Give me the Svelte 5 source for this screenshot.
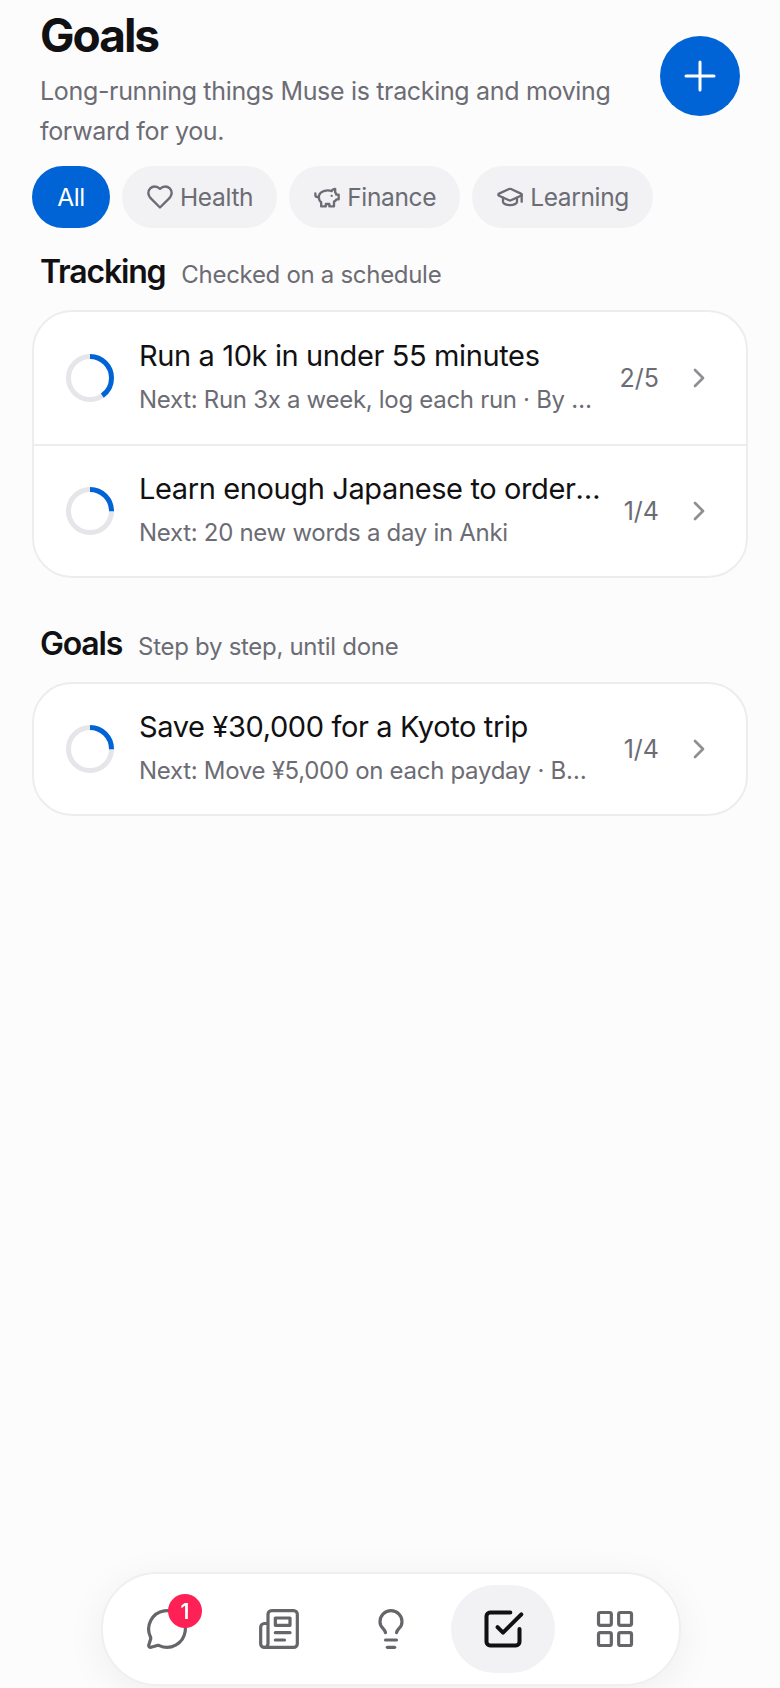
<script>
  const C = 2 * Math.PI * 21.5;
  const sections = [
    { title: 'Tracking', note: 'Checked on a schedule', rows: [
      { t: 'Run a 10k in under 55 minutes', s: 'Next: Run 3x a week, log each run · By Oct 1', c: '2/5', p: 0.4 },
      { t: 'Learn enough Japanese to order ramen', s: 'Next: 20 new words a day in Anki', c: '1/4', p: 0.25 }
    ]},
    { title: 'Goals', note: 'Step by step, until done', rows: [
      { t: 'Save ¥30,000 for a Kyoto trip', s: 'Next: Move ¥5,000 on each payday · By Dec 1', c: '1/4', p: 0.25 }
    ]}
  ];
</script>

<div class="page">
  <header class="head">
    <div class="head-text">
      <h1>Goals</h1>
      <p>Long-running things Muse is tracking and moving forward for you.</p>
    </div>
    <button class="fab" aria-label="Add">
      <svg viewBox="0 0 24 24" width="48" height="48"><path d="M5 12h14M12 5v14"/></svg>
    </button>
  </header>

  <div class="chips">
    <button class="chip on">All</button>
    <button class="chip">
      <svg viewBox="0 0 24 24" width="28" height="28"><path d="M19 14c1.49-1.46 3-3.21 3-5.5A5.5 5.5 0 0 0 16.5 3c-1.76 0-3 .5-4.5 2-1.5-1.5-2.74-2-4.5-2A5.5 5.5 0 0 0 2 8.5c0 2.3 1.5 4.05 3 5.5l7 7Z"/></svg>
      Health
    </button>
    <button class="chip">
      <svg viewBox="0 0 24 24" width="28" height="28"><path d="M19 5c-1.5 0-2.8 1.4-3 2-3.5-1.5-11-.3-11 5 0 1.8 0 3 2 4.5V20h4v-2h3v2h4v-4c1-.5 1.7-1 2-2h2v-4h-2c0-1-.5-1.5-1-2V5z"/><path d="M2 9v1c0 1.1.9 2 2 2h1"/><path d="M16 11h.01"/></svg>
      Finance
    </button>
    <button class="chip">
      <svg viewBox="0 0 24 24" width="28" height="28"><path d="M21.42 10.922a1 1 0 0 0-.019-1.838L12.83 5.18a2 2 0 0 0-1.66 0L2.6 9.08a1 1 0 0 0 0 1.832l8.57 3.908a2 2 0 0 0 1.66 0z"/><path d="M22 10v6"/><path d="M6 12.5V16a6 3 0 0 0 12 0v-3.5"/></svg>
      Learning
    </button>
  </div>

  {#each sections as sec}
    <section>
      <div class="sec-head">
        <h2>{sec.title}</h2>
        <span>{sec.note}</span>
      </div>
      <div class="card">
        {#each sec.rows as r}
          <div class="row">
            <svg class="ring" viewBox="0 0 48 48" width="48" height="48">
              <circle class="track" cx="24" cy="24" r="21.5"/>
              <circle class="arc" cx="24" cy="24" r="21.5" stroke-dasharray="{C * r.p} {C}" transform="rotate(-90 24 24)"/>
            </svg>
            <div class="txt">
              <div class="t">{r.t}</div>
              <div class="s">{r.s}</div>
            </div>
            <span class="count">{r.c}</span>
            <svg class="chev" viewBox="0 0 24 24" width="32" height="32"><path d="m9 18 6-6-6-6"/></svg>
          </div>
        {/each}
      </div>
    </section>
  {/each}
</div>

<nav class="nav">
  <div class="item">
    <svg viewBox="0 0 24 24" width="44" height="44"><path d="M2.992 16.342a2 2 0 0 1 .094 1.167l-1.065 3.29a1 1 0 0 0 1.236 1.168l3.413-.998a2 2 0 0 1 1.099.092 10 10 0 1 0-4.777-4.719"/></svg>
    <span class="badge">1</span>
  </div>
  <div class="item">
    <svg viewBox="0 0 24 24" width="44" height="44"><path d="M4 22h16a2 2 0 0 0 2-2V4a2 2 0 0 0-2-2H8a2 2 0 0 0-2 2v16a2 2 0 0 1-2 2Zm0 0a2 2 0 0 1-2-2v-9c0-1.1.9-2 2-2h2"/><path d="M18 14h-8"/><path d="M15 18h-5"/><path d="M10 6h8v4h-8V6Z"/></svg>
  </div>
  <div class="item">
    <svg viewBox="0 0 24 24" width="44" height="44"><path d="M15 14c.2-1 .7-1.7 1.5-2.5 1-.9 1.5-2.2 1.5-3.5A6 6 0 0 0 6 8c0 1 .2 2.2 1.5 3.5.7.7 1.3 1.5 1.5 2.5"/><path d="M9 18h6"/><path d="M10 22h4"/></svg>
  </div>
  <div class="item active">
    <svg viewBox="0 0 24 24" width="44" height="44"><path d="m9 11 3 3L22 4"/><path d="M21 12v7a2 2 0 0 1-2 2H5a2 2 0 0 1-2-2V5a2 2 0 0 1 2-2h11"/></svg>
  </div>
  <div class="item">
    <svg viewBox="0 0 24 24" width="44" height="44"><rect x="3" y="3" width="7" height="7" rx="1"/><rect x="14" y="3" width="7" height="7" rx="1"/><rect x="14" y="14" width="7" height="7" rx="1"/><rect x="3" y="14" width="7" height="7" rx="1"/></svg>
  </div>
</nav>

<style>
  :global(body) {
    margin: 0;
    background: #fcfcfd;
    font-family: Inter, "Noto Sans", sans-serif;
    color: #111113;
  }
  svg { fill: none; stroke: currentColor; stroke-width: 2; stroke-linecap: round; stroke-linejoin: round; display: block; flex: none; }
  button { font: inherit; border: 0; padding: 0; }
  .page { min-height: 1688px; box-sizing: border-box; padding: 0 32px; }
  .head { display: flex; justify-content: space-between; align-items: flex-start; padding: 7px 8px 0; gap: 40px; }
  h1 { margin: 0; font-size: 46px; line-height: 56px; font-weight: 700; letter-spacing: -2px; }
  .head p { margin: 8px 0 0; font-size: 25px; line-height: 40px; color: #6c6c74; letter-spacing: -.33px; }
  .fab { width: 80px; height: 80px; margin-top: 29px; border-radius: 50%; background: #0064d6; color: #fff; display: flex; align-items: center; justify-content: center; flex: none; }
  .fab svg { stroke-width: 1.5; }
  .chips { display: flex; gap: 12px; margin-top: 15px; }
  .chip { height: 62px; border-radius: 31px; background: #f2f2f5; color: #6c6c74; display: flex; align-items: center; gap: 6px; padding: 0 24px; font-size: 24.5px; letter-spacing: -.35px; }
  .chip.on { background: #0064d6; color: #fff; min-width: 78px; justify-content: center; box-sizing: border-box; }
  .chip svg { stroke-width: 2; }
  section { margin-top: 22px; }
  section + section { margin-top: 44px; }
  .sec-head { display: flex; align-items: baseline; gap: 16px; padding: 0 8px; }
  h2 { margin: 0; font-size: 32px; line-height: 44px; font-weight: 600; letter-spacing: -1.2px; }
  .sec-head span { font-size: 24px; color: #6c6c74; letter-spacing: -.3px; }
  .card { margin-top: 16px; background: #fff; border: 2px solid #ededf0; border-radius: 40px; overflow: hidden; }
  .row { display: flex; align-items: center; height: 132px; padding: 0 31px 0 32px; box-sizing: border-box; }
  .row:only-child { height: 130px; }
  .row + .row { border-top: 2px solid #ededf0; }
  .ring { margin-right: 25px; }
  .track { fill: none; stroke: #e5e5ea; stroke-width: 5; }
  .arc { fill: none; stroke: #0064d6; stroke-width: 5; stroke-linecap: butt; }
  .txt { flex: 1; min-width: 0; padding-bottom: 3px; }
  .t { font-size: 29px; line-height: 40px; font-weight: 400; letter-spacing: -.38px; margin-right: -4px; white-space: nowrap; overflow: hidden; text-overflow: ellipsis; }
  .s { font-size: 24px; line-height: 36px; margin-top: 6px; color: #6c6c74; letter-spacing: -.3px; white-space: nowrap; overflow: hidden; text-overflow: ellipsis; }
  .count { font-size: 25px; color: #6c6c74; margin-left: 24px; }
  .chev { color: #8e8e93; margin-left: 24px; stroke-width: 2; }
  .nav { position: fixed; left: 101px; bottom: 2px; display: flex; gap: 8px; padding: 11px 12px; background: #fff; border: 2px solid #efeff1; border-radius: 56px; box-shadow: 0 8px 40px rgba(0,0,0,.06); }
  .item { width: 104px; height: 88px; border-radius: 44px; display: flex; align-items: center; justify-content: center; color: #66666a; position: relative; }
  .item svg { stroke-width: 1.75; }
  .item.active { background: #f2f2f5; color: #111113; }
  .item.active svg { stroke-width: 2.2; }
  .badge { position: absolute; top: 9px; left: 53px; min-width: 34px; height: 34px; border-radius: 50%; background: #ff2056; color: #fff; font-size: 21px; font-weight: 600; display: flex; align-items: center; justify-content: center; }
</style>
